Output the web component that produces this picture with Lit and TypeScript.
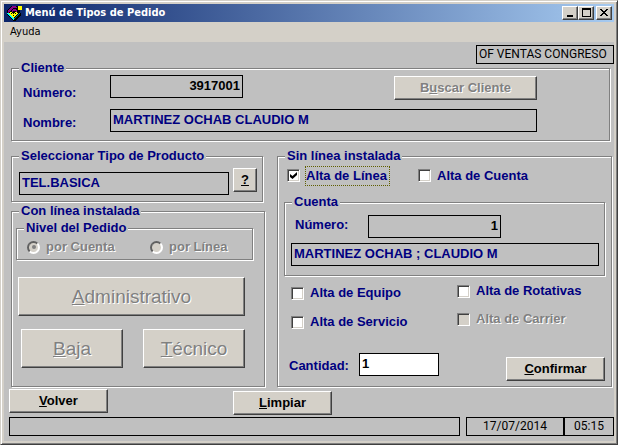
import { LitElement, html, css, svg } from "lit";
import { customElement, state } from "lit/decorators.js";

const appIcon = svg`
  <path d="M5 1h7v3h2v4h1v2l-6 6h-2l-6-6v-5z" fill="#000"/>
  <path d="M6 1h4v1h1v1h-4v1h-1v1h-1v1h-1v1h-1v2h-1v-4h1v-1h1v-1h1v-1h1z" fill="#808"/>
  <path d="M7 4h3v1h1v2h-1v-1h-3v1h-1v-2h1z" fill="#808"/>
  <path d="M1 8h2v1h1v1h1v1h1v1h1v1h1v2h-1v-1h-1v-1h-1v-1h-1v-1h-1v-1h-1v-1h-1z" fill="#0ff"/>
  <path d="M13 8h1v1h-1v1h-1v1h-1v1h-1v1h-1v1h-1v-1h1v-1h1v-1h1v-1h1v-1h1z" fill="#088"/>
  <path d="M4 7h2v1h1v1h1v-1h1v-1h2v1h1v1h-1v1h-1v1h-1v1h-1v1h-1v-1h-1v-1h-1v-1h-1v-1h-1v-1h1z" fill="#ff0"/>
  <path d="M5 8h1v1h-1zM9 8h1v1h-1zM7 10h1v1h-1z" fill="#000"/>
  <path d="M12 1h4v4h-4z" fill="#ff0"/>`;

@customElement("app-root")
export class AppRoot extends LitElement {
  @state() private quantity = "1";

  static styles = css`
    :host {
      display: block;
      font: bold 13px/14px "Liberation Sans", Arial, sans-serif;
      color: #000080;
    }
    * { box-sizing: border-box; }
    .window {
      display: flex;
      flex-direction: column;
      min-height: 100vh;
      padding: 3px;
      background: #d4d0c8;
      border: 1px solid;
      border-color: #d4d0c8 #404040 #404040 #d4d0c8;
      box-shadow: inset 1px 1px 0 #fff, inset -1px -1px 0 #808080;
    }
    .titlebar {
      display: flex;
      align-items: center;
      height: 18px;
      padding: 0 2px;
      background: linear-gradient(to right, #0a246a, #a6caf0);
      color: #fff;
    }
    .titlebar svg.app { width: 16px; height: 16px; flex: none; }
    .title {
      flex: 1;
      margin: 0;
      padding-left: 3px;
      font: bold 11px/14px "DejaVu Sans Condensed", Tahoma, sans-serif;
    }
    .caption {
      width: 16px;
      height: 14px;
      padding: 0;
      display: grid;
      place-items: center;
      background: #d4d0c8;
      border: 1px solid;
      border-color: #fff #404040 #404040 #fff;
      box-shadow: inset -1px -1px 0 #808080;
    }
    .caption.close { margin-left: 2px; }
    .caption svg { width: 12px; height: 10px; display: block; }
    .menu { display: flex; height: 20px; }
    .menu button {
      padding: 0 6px;
      border: 0;
      background: none;
      color: #000;
      font: 11px/18px "DejaVu Sans Condensed", Tahoma, sans-serif;
    }
    .body {
      flex: 1;
      display: flex;
      flex-direction: column;
      padding: 3px 0 5px;
      background: #c0c0c0;
    }
    .box {
      height: 19px;
      border: 1px solid #000;
      color: #000;
      font: 12px/17px Roboto, "Liberation Sans", sans-serif;
    }
    .office {
      align-self: flex-end;
      width: 138px;
      padding-left: 2px;
      white-space: nowrap;
    }
    fieldset {
      min-width: 0;
      margin: 0;
      padding: 0;
      border: 1px solid #808080;
      box-shadow: 1px 1px 0 #fff, inset 1px 1px 0 #fff;
    }
    legend {
      margin-left: 7px;
      padding: 0 2px;
      background: #c0c0c0;
      line-height: 14px;
    }
    input { border-radius: 0; margin: 0; }
    .field {
      width: 100%;
      min-width: 0;
      height: 23px;
      padding: 0 2px 2px;
      border: 1px solid #000;
      background: transparent;
      color: #000080;
      font: inherit;
      outline: none;
    }
    .number { width: 133px; text-align: right; color: #000; }
    .quantity { width: 80px; background: #fff; color: #000; }
    .button {
      height: 24px;
      padding: 0;
      background: #d4d0c8;
      border: 1px solid;
      border-color: #fff #404040 #404040 #fff;
      box-shadow: inset -1px -1px 0 #808080;
      color: #000;
      font: inherit;
    }
    .button.command { width: 99px; }
    .button.large {
      height: 39px;
      font-weight: normal;
      font-size: 19px;
    }
    .button:disabled, .disabled { color: #808080; text-shadow: 1px 1px 0 #fff; }

    .client { margin: -3px 4px 0 7px; }
    .client-grid {
      display: grid;
      grid-template-columns: 87px 1fr;
      grid-template-rows: 25px 23px;
      row-gap: 9px;
      padding: 0 72px 8px 11px;
    }
    .client-grid label:first-child { align-self: end; }
    .lowered { align-self: center; padding-top: 4px; }
    .client-number { display: flex; justify-content: space-between; }
    .client-number .button { width: 143px; align-self: flex-end; }

    .columns {
      display: grid;
      grid-template-columns: 254fr 335fr;
      gap: 12px;
      align-items: start;
      margin: 8px 2px 0 7px;
    }
    .product { margin-right: 2px; }
    .product-row {
      display: flex;
      gap: 4px;
      align-items: flex-end;
      padding: 5px 5px 6px 7px;
    }
    .product-row .button { width: 24px; flex: none; margin-bottom: 3px; }
    .existing { margin-top: 2px; }
    .existing-content { padding: 3px 11px 18px 4px; }
    .levels {
      display: grid;
      grid-template-columns: 123px 1fr;
      height: 24px;
      padding-left: 10px;
    }
    .choice { display: flex; align-items: center; gap: 6px; white-space: nowrap; }
    .actions { display: grid; gap: 13px; padding: 17px 8px 0 2px; }
    .pair { display: grid; grid-template-columns: 1fr 1fr; gap: 20px; padding-left: 3px; }

    input[type="radio"] {
      appearance: none;
      flex: none;
      width: 13px;
      height: 13px;
      border-radius: 50%;
      background: #d4d0c8;
      border: 2px solid;
      border-color: #606060 #fff #fff #606060;
      display: grid;
      place-items: center;
    }
    input[type="radio"]:checked::before {
      content: "";
      width: 4px;
      height: 4px;
      border-radius: 50%;
      background: #808080;
    }
    input[type="checkbox"] {
      appearance: none;
      flex: none;
      width: 13px;
      height: 13px;
      background: #fff;
      border: 1px solid;
      border-color: #808080 #fff #fff #808080;
      box-shadow: inset 1px 1px 0 #404040, inset -1px -1px 0 #d4d0c8;
      display: grid;
      place-items: center;
    }
    input[type="checkbox"]:disabled { background: #d4d0c8; }
    input[type="checkbox"]:checked::before {
      content: "";
      width: 7px;
      height: 7px;
      background: #000;
      clip-path: polygon(0 29%, 36% 58%, 100% 0, 100% 43%, 36% 100%, 0 71%);
    }

    .new-line {
      display: grid;
      grid-template-columns: 131px 1fr;
      height: 22px;
      padding: 3px 0 0 9px;
    }
    .focused { padding: 2px 2px 2px 0; outline: 1px dotted #606000; }
    .account { margin: 10px 6px 0; }
    .account-content { display: grid; gap: 5px; padding: 6px 5px 9px 6px; }
    .account-number { display: flex; padding-left: 4px; }
    .account-number label { width: 73px; line-height: 20px; }
    .options {
      display: grid;
      grid-template-columns: 166px 1fr;
      padding-left: 13px;
    }
    .stack { display: grid; gap: 13px; padding-top: 9px; }
    .stack.raised { padding-top: 7px; gap: 12px; align-content: start; }
    .stack .choice { height: 16px; }
    .confirm {
      display: flex;
      align-items: flex-end;
      padding: 23px 6px 5px 11px;
    }
    .confirm label { width: 70px; padding-bottom: 8px; }
    .confirm .quantity { margin-bottom: 5px; }
    .confirm .button { margin-left: auto; }

    .footer {
      display: flex;
      align-items: flex-start;
      gap: 125px;
      padding: 2px 0 0 5px;
    }
    .footer .button + .button { margin-top: 2px; }
    .status { display: flex; margin-top: 2px; padding-left: 5px; text-align: center; }
    .message { flex: 1; margin-right: 6px; }
    .date { width: 98px; }
    .time { width: 50px; }
  `;

  private check(id: string, text: string, checked = false, disabled = false) {
    return html`<div class="choice">
      <input type="checkbox" id=${id} ?checked=${checked} ?disabled=${disabled} />
      <label for=${id} class=${checked ? "focused" : disabled ? "disabled" : ""}>${text}</label>
    </div>`;
  }

  render() {
    return html`
      <main class="window">
        <header class="titlebar">
          <svg class="app" viewBox="0 0 16 16" shape-rendering="crispEdges" aria-hidden="true">${appIcon}</svg>
          <h1 class="title">Menú de Tipos de Pedido</h1>
          <button class="caption" aria-label="Minimizar">
            <svg viewBox="0 0 12 10"><path d="M3 7h6v2h-6z" /></svg>
          </button>
          <button class="caption" aria-label="Maximizar">
            <svg viewBox="0 0 12 10"><path fill-rule="evenodd" d="M2 0h9v9h-9zM3 2v6h7v-6z" /></svg>
          </button>
          <button class="caption close" aria-label="Cerrar">
            <svg viewBox="0 0 12 10" shape-rendering="crispEdges">
              <path d="M2 1h2v1h1v1h2v-1h1v-1h2v1h-1v1h-1v1h-1v1h1v1h1v1h1v1h-2v-1h-1v-1h-2v1h-1v1h-2v-1h1v-1h1v-1h1v-1h-1v-1h-1v-1h-1z" />
            </svg>
          </button>
        </header>
        <nav class="menu"><button>Ayuda</button></nav>
        <div class="body">
          <div class="box office">OF VENTAS CONGRESO</div>

          <fieldset class="client">
            <legend>Cliente</legend>
            <div class="client-grid">
              <label for="client-number">Número:</label>
              <div class="client-number">
                <input class="field number" id="client-number" readonly value="3917001" />
                <button class="button" disabled>B<u>u</u>scar Cliente</button>
              </div>
              <label class="lowered" for="client-name">Nombre:</label>
              <input class="field" id="client-name" readonly value="MARTINEZ OCHAB CLAUDIO M" />
            </div>
          </fieldset>

          <div class="columns">
            <div>
              <fieldset class="product">
                <legend>Seleccionar Tipo de Producto</legend>
                <div class="product-row">
                  <input class="field" aria-label="Tipo de Producto" readonly value="TEL.BASICA" />
                  <button class="button"><u>?</u></button>
                </div>
              </fieldset>

              <fieldset class="existing">
                <legend>Con línea instalada</legend>
                <div class="existing-content">
                  <fieldset>
                    <legend>Nivel del Pedido</legend>
                    <div class="levels">
                      <div class="choice">
                        <input type="radio" name="level" id="by-account" checked disabled />
                        <label class="disabled" for="by-account">por Cuenta</label>
                      </div>
                      <div class="choice">
                        <input type="radio" name="level" id="by-line" disabled />
                        <label class="disabled" for="by-line">por Línea</label>
                      </div>
                    </div>
                  </fieldset>
                  <div class="actions">
                    <button class="button large" disabled><u>A</u>dministrativo</button>
                    <div class="pair">
                      <button class="button large" disabled><u>B</u>aja</button>
                      <button class="button large" disabled><u>T</u>écnico</button>
                    </div>
                  </div>
                </div>
              </fieldset>
            </div>

            <fieldset>
              <legend>Sin línea instalada</legend>
              <div class="new-line">
                ${this.check("new-line", "Alta de Línea", true)}
                ${this.check("new-account", "Alta de Cuenta")}
              </div>
              <fieldset class="account">
                <legend>Cuenta</legend>
                <div class="account-content">
                  <div class="account-number">
                    <label for="account-number">Número:</label>
                    <input class="field number" id="account-number" readonly value="1" />
                  </div>
                  <input class="field" aria-label="Titular de la cuenta" readonly value="MARTINEZ OCHAB ; CLAUDIO M" />
                </div>
              </fieldset>
              <div class="options">
                <div class="stack">
                  ${this.check("equipment", "Alta de Equipo")}
                  ${this.check("service", "Alta de Servicio")}
                </div>
                <div class="stack raised">
                  ${this.check("rotary", "Alta de Rotativas")}
                  ${this.check("carrier", "Alta de Carrier", false, true)}
                </div>
              </div>
              <div class="confirm">
                <label for="quantity">Cantidad:</label>
                <input
                  class="field quantity"
                  id="quantity"
                  .value=${this.quantity}
                  @input=${(e: Event) => (this.quantity = (e.target as HTMLInputElement).value)}
                />
                <button class="button command"><u>C</u>onfirmar</button>
              </div>
            </fieldset>
          </div>

          <div class="footer">
            <button class="button command"><u>V</u>olver</button>
            <button class="button command"><u>L</u>impiar</button>
          </div>
          <footer class="status">
            <div class="box message"></div>
            <div class="box date">17/07/2014</div>
            <div class="box time">05:15</div>
          </footer>
        </div>
      </main>
    `;
  }
}
